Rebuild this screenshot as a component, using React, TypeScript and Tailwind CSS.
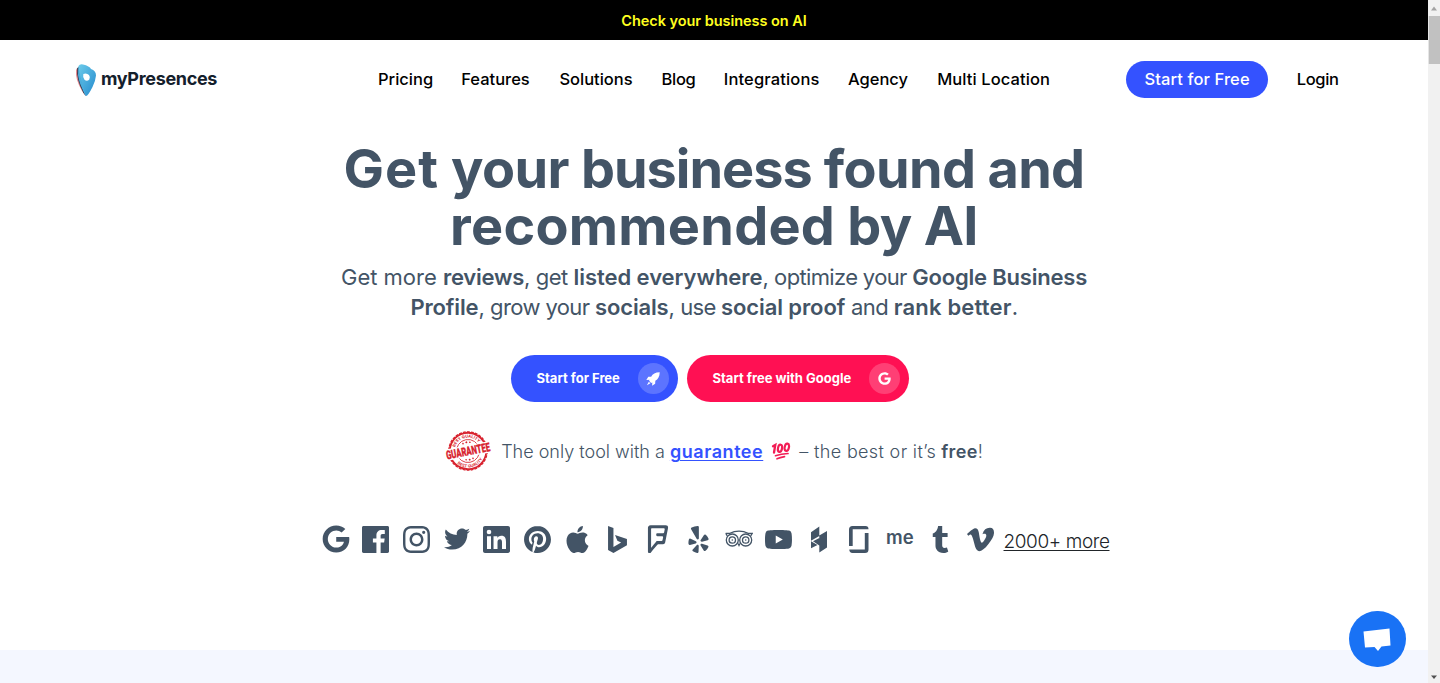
import { FaGoogle, FaTwitter, FaYelp, FaFoursquare } from "react-icons/fa";
import { SiInstagram, SiPinterest, SiApple, SiTumblr, SiVimeo, SiYoutube } from "react-icons/si";

const nav = [
  { label: "Pricing", cls: "w-[55px]" },
  { label: "Features", cls: "w-[70px]" },
  { label: "Solutions", cls: "w-[74px]" },
  { label: "Blog", cls: "w-[34px] tracking-[-0.3px]" },
  { label: "Integrations", cls: "w-[96px] tracking-[0.15px]" },
  { label: "Agency", cls: "w-[61px]" },
  { label: "Multi Location", cls: "w-[113px] tracking-[0.1px]" },
];

function Facebook() {
  return (
    <svg viewBox="0 0 24 24" className="size-[27px]" fill="currentColor">
      <path d="M22.676 0H1.324C.593 0 0 .593 0 1.324v21.352C0 23.408.593 24 1.324 24h11.494v-9.294H9.689v-3.621h3.129V8.41c0-3.099 1.894-4.785 4.659-4.785 1.325 0 2.464.097 2.796.141v3.24h-1.921c-1.5 0-1.792.721-1.792 1.771v2.311h3.584l-.465 3.63H16.56V24h6.115c.733 0 1.325-.592 1.325-1.324V1.324C24 .593 23.408 0 22.676 0" />
    </svg>
  );
}

function Linkedin() {
  return (
    <svg viewBox="0 0 24 24" className="size-[27px]" fill="currentColor">
      <path d="M20.447 20.452h-3.554v-5.569c0-1.328-.027-3.037-1.852-3.037-1.853 0-2.136 1.445-2.136 2.939v5.667H9.351V9h3.414v1.561h.046c.477-.9 1.637-1.85 3.37-1.85 3.601 0 4.267 2.37 4.267 5.455v6.286zM5.337 7.433a2.062 2.062 0 0 1-2.063-2.065 2.064 2.064 0 1 1 2.063 2.065zm1.782 13.019H3.555V9h3.564v11.452zM22.225 0H1.771C.792 0 0 .774 0 1.729v20.542C0 23.227.792 24 1.771 24h20.451C23.2 24 24 23.227 24 22.271V1.729C24 .774 23.2 0 22.222 0h.003z" />
    </svg>
  );
}

function Bing() {
  return (
    <svg viewBox="0 0 24 24" className="size-[27px]" fill="currentColor">
      <path d="M3.6 0l4.8 1.7v16.9l6.8-3.9-3.3-1.6-2.1-5.2 10.600 3.7v5.4L8.4 24l-4.8-2.7z" />
    </svg>
  );
}

function Tripadvisor() {
  return (
    <svg viewBox="0 0 28 18" className="h-[18px] w-[28px]" fill="none" stroke="currentColor">
      <path d="M.7 3.300H5C10.200.300 17.800.300 23 3.300h4.300c-.7.8-1.200 1.600-1.400 2.500M.7 3.300c.7.8 1.200 1.600 1.400 2.500" strokeWidth="1.300" />
      <circle cx="7.300" cy="10" r="6" strokeWidth="1.300" />
      <circle cx="20.700" cy="10" r="6" strokeWidth="1.300" />
      <circle cx="7.300" cy="10" r="3.200" strokeWidth="1.300" />
      <circle cx="20.700" cy="10" r="3.200" strokeWidth="1.300" />
      <circle cx="7.300" cy="10" r=".8" fill="currentColor" stroke="none" />
      <circle cx="20.700" cy="10" r=".8" fill="currentColor" stroke="none" />
      <path d="M12.400 13.500L14 17l1.600-3.500z" fill="currentColor" stroke="none" />
    </svg>
  );
}

function Houzz() {
  return (
    <svg viewBox="0 0 24 27" className="h-[27px] w-[24px]" fill="currentColor">
      <path d="M4 6.300L12.300.500V10L4 14.700zM4 15.300L10.500 19 4 22.300zM12.300 9.500L20 5V21.500L12.300 26.500zM12.300 12V19.500L6 15.300z" />
    </svg>
  );
}

function Glassdoor() {
  return (
    <svg viewBox="0 0 20 27" className="h-[27px] w-[20px]" fill="currentColor">
      <path d="M3.500 0H16.500Q19.500 0 19.500 3.200H3.700V20H0V3.500Q0 0 3.500 0zM19.500 7V23.500Q19.500 27 16 27H3.500Q.3 27 .3 23.600H15.800V7z" />
    </svg>
  );
}

function Rocket() {
  return (
    <svg viewBox="0 0 24 24" className="size-[14px]" fill="currentColor">
      <path d="M23.500.5C16 .5 11.500 3.500 8.800 8L4 8.300 .5 13.500 6 13.200 5.300 15.200 8.800 18.700 10.800 18 10.500 23.500 15.700 20 16 15.200C20.500 12.500 23.500 8 23.500.5z" />
      <path d="M4.800 16.500L7.500 19.200 1.500 22.500z" />
    </svg>
  );
}

const socials = [
  <FaGoogle className="size-[28px]" />,
  <Facebook />,
  <SiInstagram className="size-[27px]" />,
  <FaTwitter className="size-[26px]" />,
  <Linkedin />,
  <SiPinterest className="size-[27px]" />,
  <SiApple className="size-[27px]" />,
  <Bing />,
  <FaFoursquare className="size-[28px]" />,
  <FaYelp className="size-[27px]" />,
  <Tripadvisor />,
  <SiYoutube className="size-[27px]" />,
  <Houzz />,
  <Glassdoor />,
  <span className="-mt-1 text-[18.500px] font-semibold leading-6">me</span>,
  <SiTumblr className="size-[27px]" />,
  <SiVimeo className="size-[27px]" />,
];

function LogoMark() {
  return (
    <svg viewBox="0 0 22 34" className="h-[34px] w-[22px]">
      <defs>
        <linearGradient id="pin" x1="0" y1="0" x2="1" y2="1">
          <stop offset="0" stopColor="#6ccbea" />
          <stop offset="1" stopColor="#2389cd" />
        </linearGradient>
      </defs>
      <path d="M1 7Q0 16 7 28L10.500 33 4 4Q1.500 5 1 7z" fill="#e48b91" />
      <path d="M2.300 5Q1 16 8.500 30L11 33 6 3z" fill="#1d3148" />
      <path d="M3.500 3Q5 .5 8 1.500Q14.500 3 16 6Q21 7.500 21 12.500Q20.500 18 17.500 24Q13 33 11 33Q9.500 32 8.500 28L4.500 13Q3 6 3.500 3z" fill="url(#pin)" />
      <path d="M3.500 3Q4 10 8.500 25L11 33Q4 21 3 12z" fill="#4caedd" />
      <path d="M8.300 11Q11.500 9.600 14 12Q15.600 14 14.300 16.500Q12 18.800 9.500 16.800Q7.500 14.500 8.300 11z" fill="#fff" />
    </svg>
  );
}

function Stamp() {
  return (
    <svg viewBox="0 0 46 42" className="h-[42px] w-[46px] overflow-visible">
      <defs>
        <path id="arcTop" d="M9.500 21A13.500 13.500 0 0 1 36.500 21" />
        <path id="arcBottom" d="M6.500 21A16.500 16.500 0 0 0 39.500 21" />
      </defs>
      <g transform="rotate(-11 23 21)" fill="none" stroke="#d8232f">
        <circle cx="23" cy="21" r="18.200" strokeWidth="1.800" />
        <circle cx="23" cy="21" r="19.200" strokeWidth="1.300" strokeDasharray="2.900 1.120" />
        <circle cx="23" cy="21" r="11.500" strokeWidth=".8" />
        <g fill="#d8232f" stroke="none" className="font-['Inter',sans-serif] font-bold">
          <text fontSize="4"><textPath href="#arcTop" startOffset="50%" textAnchor="middle">BEST QUALITY</textPath></text>
          <text fontSize="4"><textPath href="#arcBottom" startOffset="50%" textAnchor="middle">BEST QUALITY</textPath></text>
          <circle cx="19.500" cy="12.800" r=".8" /><circle cx="23" cy="12.200" r="1" /><circle cx="26.500" cy="12.800" r=".8" />
          <circle cx="19.500" cy="29.200" r=".8" /><circle cx="23" cy="29.800" r="1" /><circle cx="26.500" cy="29.200" r=".8" />
        </g>
        <path d="M0 15.300H46V26.700H0z" fill="#fff" stroke="none" />
        <text x="23" y="25.300" fontSize="12" textAnchor="middle" textLength="44.500" lengthAdjust="spacingAndGlyphs" fill="#d8232f" strokeWidth=".3" className="font-['Roboto',sans-serif] font-black">GUARANTEE</text>
      </g>
    </svg>
  );
}

function Hundred() {
  return (
    <svg viewBox="0 0 20 18" className="h-[18px] w-[20px]" fill="none" stroke="#f21d55" strokeLinecap="round">
      <path d="M2 4.300L4.300 3 3 10.500" strokeWidth="2.300" />
      <ellipse cx="9" cy="6.300" rx="2" ry="3.600" transform="rotate(12 9 6.300)" strokeWidth="2.200" />
      <ellipse cx="15.800" cy="5.300" rx="2.100" ry="3.700" transform="rotate(12 15.800 5.300)" strokeWidth="2.200" />
      <path d="M4.500 13.700Q10 12 17 11.500M6 16.800Q9 15.600 13.500 14.700" strokeWidth="1.700" />
    </svg>
  );
}

export default function App() {
  return (
    <div className="flex h-[683px] w-full overflow-hidden bg-white font-['Inter',sans-serif]">
      <div className="relative flex min-w-0 flex-1 flex-col">
        <div className="flex h-10 shrink-0 items-center justify-center bg-black pt-px text-[14.500px] font-semibold text-[#ffff1f]">
          <a className="tracking-[-0.05px]">Check your business on AI</a>
        </div>
        <header className="flex h-[79px] shrink-0 items-center pl-[75px]">
          <a className="flex w-[303px] items-center gap-1">
            <LogoMark />
            <span className="-mt-0.5 text-[18px] font-bold tracking-[-0.33px] text-[#14202c]">myPresences</span>
          </a>
          <nav className="flex gap-[28.200px] text-[16.500px] font-medium whitespace-nowrap text-black">
            {nav.map((n) => (
              <a key={n.label} className={n.cls}>{n.label}</a>
            ))}
          </nav>
          <a className="ml-[76px] flex h-[37px] w-[142px] items-center justify-center rounded-full bg-[#3452ff] text-[16.500px] font-medium tracking-[0.1px] text-white">Start for Free</a>
          <a className="ml-[28.500px] text-[16.500px] font-medium tracking-[-0.3px] text-black">Login</a>
        </header>
        <main className="flex shrink-0 flex-col items-center text-[#435466]">
          <h1 className="mt-[21px] text-center text-[54px] leading-[57px] font-bold tracking-[-0.65px] whitespace-nowrap">
            <span className="tracking-[1px]">Get</span> your <span className="tracking-[-1px]">business</span> found and
            <br />
            <span className="tracking-[0.25px]">recommended</span> by AI
          </h1>
          <p className="mt-[8px] text-center text-[22px] leading-[30px] tracking-[-0.45px] whitespace-nowrap">
            <span className="tracking-normal">Get more </span>
            <b className="font-semibold tracking-[-0.25px]">reviews</b>, get <b className="font-semibold tracking-[-0.05px]">listed everywhere</b>, <span className="tracking-[-0.65px]">optimize your </span><b className="font-semibold tracking-[-0.2px]">Google Business</b>
            <br />
            <b className="font-semibold tracking-[-0.15px]">Profile</b>, <span className="tracking-[-0.6px]">grow your </span><b className="font-semibold tracking-[-0.15px]">socials</b>, <span className="tracking-[-0.7px]">use </span><b className="font-semibold tracking-[-0.1px]">social proof</b> <span className="tracking-[-0.55px]">and </span><b className="font-semibold tracking-[0.2px]">rank better</b>.
          </p>
          <div className="mt-[33px] mr-[9px] flex gap-[9px] text-[13px] font-bold text-white">
            <a className="flex h-[47px] w-[167px] items-center justify-between rounded-full bg-[#3452ff] pr-[9px] pl-[26px]">
              Start for Free
              <span className="flex size-[31px] items-center justify-center rounded-full bg-white/20"><Rocket /></span>
            </a>
            <a className="flex h-[47px] w-[222px] items-center justify-between rounded-full bg-[#ff1053] pr-[9px] pl-[26px]">
              Start free with Google
              <span className="flex size-[31px] items-center justify-center rounded-full bg-white/20"><FaGoogle className="size-[13px]" /></span>
            </a>
          </div>
          <div className="mt-[28px] flex h-[42px] items-center text-[18px] font-light whitespace-nowrap">
            <Stamp />
            <span className="ml-[10px]">The only tool with a</span>
            <a className="ml-[5px] font-semibold tracking-[0.55px] text-[#3452ff] underline decoration-1 underline-offset-2">guarantee</a>
            <span className="mx-[8px]"><Hundred /></span>
            <span className="tracking-[0.35px]">– the best or it’s</span>
            <b className="ml-[5px] font-semibold tracking-[0.4px]">free</b>!
          </div>
          <div className="mt-[47px] mr-[3px] flex h-[40px] items-center">
            {socials.map((s, i) => (
              <span key={i} className="flex w-[40.300px] items-center justify-center">{s}</span>
            ))}
            <a className="mt-[7px] ml-[3px] text-[19px] font-light tracking-[-0.4px] text-[#212529] underline decoration-1 underline-offset-2">2000+ more</a>
          </div>
        </main>
        <div className="mt-auto h-[33px] shrink-0 bg-[#f4f7ff]" />
        <button className="absolute right-[22px] bottom-[16px] flex h-[56px] w-[57px] items-center justify-center rounded-full bg-[#1972f5]">
          <svg viewBox="0 0 28 24" className="mt-0.5 mr-0.5 h-[24px] w-[28px]" fill="#fff"><path d="M.5 3.500L26.500.500 27.500 17.500 18.500 18.500 15 23 11.500 19 2 19.500z" /></svg>
        </button>
      </div>
      <div className="flex w-3 shrink-0 flex-col items-center bg-[#f1f1f1]">
        <svg viewBox="0 0 12 16" className="h-4 w-3"><path d="M6 6.500L9 10.500H3z" fill="#a3a3a3" /></svg>
        <div className="h-12 w-full border-l border-[#e5e5e5] bg-[#c1c1c1]" />
        <svg viewBox="0 0 12 16" className="mt-auto h-4 w-3"><path d="M3 8.500H9L6 12z" fill="#505050" /></svg>
      </div>
    </div>
  );
}
